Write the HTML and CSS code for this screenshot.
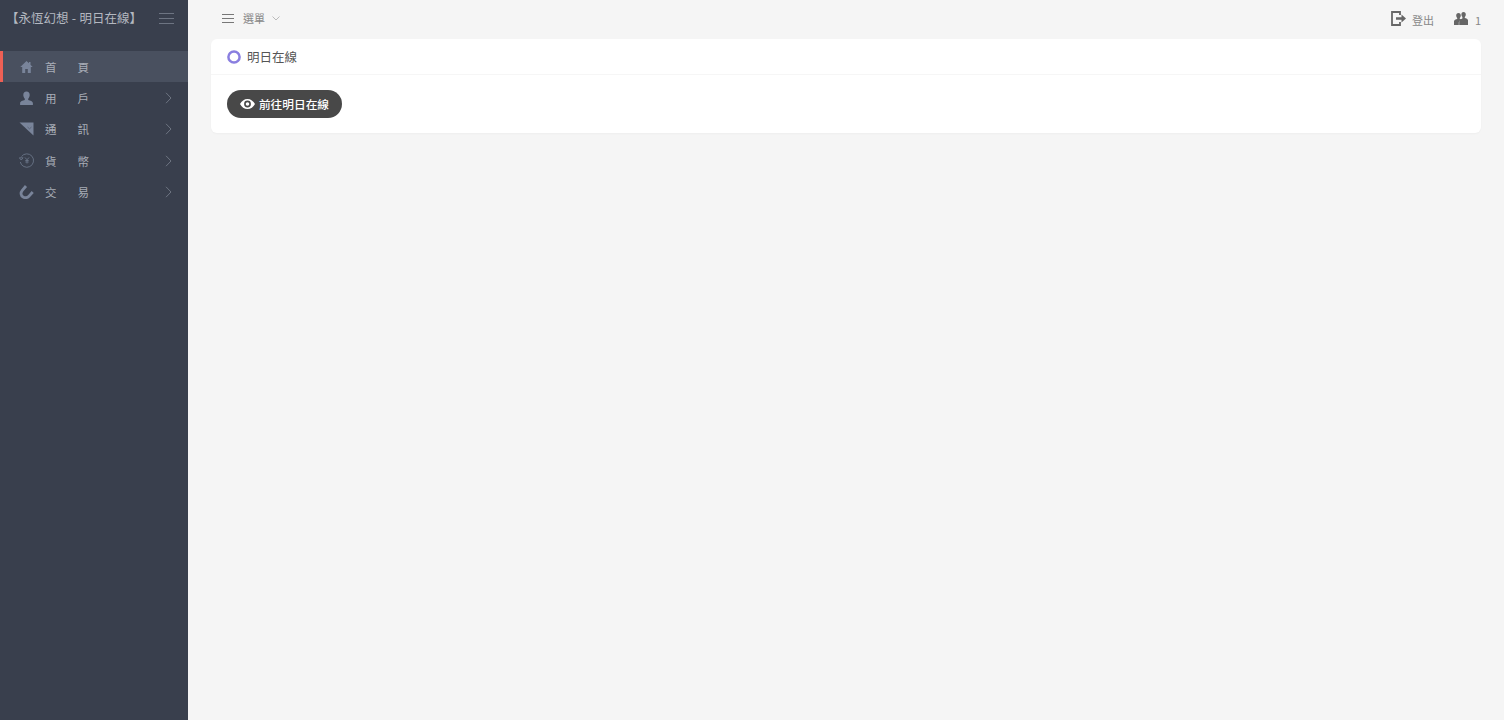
FILE: index.html
```html
<!DOCTYPE html>
<html lang="zh-Hant">
<head>
<meta charset="utf-8">
<title>永恆幻想</title>
<link rel="stylesheet" href="styles.css">
</head>
<body>
<div class="side">
  <div class="logo">
    <span class="logo-text">【永恆幻想 - 明日在線】</span>
    <svg class="logo-bars" width="15" height="11" viewBox="0 0 15 11"><path d="M0 .5h15M0 5.500h15M0 10.500h15" stroke="#6d7482" fill="none"/></svg>
  </div>
  <ul class="menu">
    <li class="on">
      <svg class="ico" width="14" height="14" viewBox="0 0 14 14"><path d="M7 1 .8 7h1.900v6h3V9h2.600v4h3V7h1.900L11 4.700V2H9.500v1.300z" fill="#79849a"/></svg>
      <span class="txt">首　頁</span>
    </li>
    <li>
      <svg class="ico" width="14" height="15" viewBox="0 0 14 15"><path d="M7 .5c2.100 0 3.200 1.500 3.200 3.500 0 1.500-.7 2.900-1.500 3.700v1.200c2 .5 4.700 1.100 4.700 3.300v1.800H.6v-1.800c0-2.200 2.700-2.800 4.700-3.300V7.700C4.500 6.900 3.800 5.500 3.800 4 3.800 2 4.900.5 7 .5z" fill="#79849a"/></svg>
      <span class="txt">用　戶</span>
      <svg class="arr" width="7" height="12" viewBox="0 0 7 12"><path d="m1 .8 5 5.200-5 5.200" stroke="#6d7482" fill="none"/></svg>
    </li>
    <li>
      <svg class="ico" width="14" height="14" viewBox="0 0 14 14"><path d="M0 .5h14v13z" fill="#79849a"/><path d="m8 5 2 1.800L12 5" stroke="#4d586b" fill="none" stroke-width=".7"/></svg>
      <span class="txt">通　訊</span>
      <svg class="arr" width="7" height="12" viewBox="0 0 7 12"><path d="m1 .8 5 5.200-5 5.200" stroke="#6d7482" fill="none"/></svg>
    </li>
    <li>
      <svg class="ico" width="15" height="15" viewBox="0 0 15 15"><path d="M2.500 3.500A6.700 6.700 0 1 1 1.300 9" stroke="#6a7588" fill="none" stroke-width=".9"/><path d="M.3 4.800h3.800L2.200 7zM6 4.500l2 2.300 2-2.300M8 6.800v3.700M6.300 7.500h3.400M6.300 9h3.400" stroke="#6a7588" fill="none" stroke-width=".9"/></svg>
      <span class="txt">貨　幣</span>
      <svg class="arr" width="7" height="12" viewBox="0 0 7 12"><path d="m1 .8 5 5.200-5 5.200" stroke="#6d7482" fill="none"/></svg>
    </li>
    <li>
      <svg class="ico" width="14" height="14" viewBox="0 0 14 14"><path d="M6.500 1 2.800 5.300C.8 7.800 1.300 10.800 3.600 12c2.400 1.300 4.800.5 6.400-1.400l3.200-3.600" stroke="#79849a" fill="none" stroke-width="2.800"/></svg>
      <span class="txt">交　易</span>
      <svg class="arr" width="7" height="12" viewBox="0 0 7 12"><path d="m1 .8 5 5.200-5 5.200" stroke="#6d7482" fill="none"/></svg>
    </li>
  </ul>
</div>
<div class="main">
  <div class="top">
    <div class="top-l">
      <svg width="12" height="9" viewBox="0 0 12 9"><path d="M0 .5h12M0 4.500h12M0 8.500h12" stroke="#777" fill="none"/></svg>
      <span class="top-menu">選單</span>
      <svg width="8" height="5" viewBox="0 0 8 5"><path d="m.5.500 3.500 3.500L7.500.500" stroke="#bbb" fill="none"/></svg>
    </div>
    <div class="top-r">
      <a class="top-link">
        <svg width="15" height="15" viewBox="0 0 15 15"><path d="M9 4V1H1v13h8v-3" stroke="#666" stroke-width="1.800" fill="none"/><path d="M5 6.300h5.500V3.600L15 7.500l-4.500 3.900V8.700H5z" fill="#666"/></svg>
        <span>登出</span>
      </a>
      <a class="top-link">
        <svg width="14" height="14" viewBox="0 0 14 14"><path d="M4.500 1C6 1 6.800 2.100 6.800 3.500c0 1.100-.5 2-1 2.600v.8c.7.200 1.400.4 2 .8-1.500.5-3 1.200-3 2.800V13H0V9.300c0-1.600 1.800-2 3.200-2.400v-.8c-.5-.6-1-1.500-1-2.600C2.200 2.100 3 1 4.500 1z" fill="#666"/><path d="M9.500 0C11 0 11.800 1.100 11.800 2.500c0 1.100-.5 2-1 2.600v.8c1.400.4 3.200.8 3.200 2.400V13H5.200V9.500c0-1.600 1.800-2.600 3.200-3V5.100c-.5-.6-1-1.500-1-2.600C7.400 1.100 8 0 9.500 0z" fill="#666"/></svg>
        <span class="num">1</span>
      </a>
    </div>
  </div>
  <div class="card">
    <div class="card-head">
      <svg class="ring" width="14" height="14" viewBox="0 0 14 14"><circle cx="7" cy="7" r="5.600" stroke="#8a7fe0" stroke-width="2.500" fill="none"/></svg>
      <span>明日在線</span>
    </div>
    <div class="card-body">
      <a class="btn">
        <svg width="15" height="10" viewBox="0 0 15 10"><path fill-rule="evenodd" d="M7.500 0C4.300 0 1.600 2 0 5c1.600 3 4.300 5 7.500 5S13.400 8 15 5c-1.600-3-4.300-5-7.500-5zm0 1.600a3.400 3.400 0 1 1 0 6.800 3.400 3.400 0 0 1 0-6.800zm0 1.600a1.800 1.800 0 1 0 0 3.600 1.800 1.800 0 0 0 0-3.600z" fill="#fff"/></svg>
        <span class="btn-txt">前往明日在線</span>
      </a>
    </div>
  </div>
</div>
</body>
</html>
```

FILE: styles.css
```css
*{
margin: 0;
padding: 0;
box-sizing: border-box;
}
html,body{
height: 100%;
}
body{
display: flex;
background: #f5f5f5;
font-family: "Noto Sans CJK TC","Noto Sans",sans-serif;
font-size: 12px;
color: #666;
overflow: hidden;
}
.side{
width: 188px;
height: 720px;
background: #393f4d;
flex: none;
}
.logo{
height: 51px;
padding: 9px 14px 0 6px;
display: flex;
justify-content: space-between;
align-items: flex-start;
}
.logo-text{
font-size: 12.500px;
word-spacing: .5px;
line-height: 17px;
color: #b4b8c0;
white-space: nowrap;
}
.logo-bars{
margin-top: 4px;
}
.menu{
list-style: none;
}
.menu li{
height: 31.4px;
display: flex;
align-items: center;
padding-left: 19px;
padding-right: 16px;
color: #a8adb7;
}
.menu li.on{
background: #49505f;
border-left: 3px solid #ee6055;
padding-left: 16px;
}
.ico{
width: 15px;
flex: none;
}
.txt{
margin-left: 11px;
font-size: 11.500px;
letter-spacing: 4.700px;
flex: 1;
white-space: nowrap;
}
.arr{
flex: none;
}
.main{
flex: 1;
padding: 0 23px;
min-width: 0;
}
.top{
height: 39px;
display: flex;
justify-content: space-between;
}
.top-l{
display: flex;
align-items: center;
height: 36px;
padding-left: 11px;
}
.top-menu{
margin: 0 7px 0 9px;
color: #888;
font-size: 11px;
}
.top-r{
display: flex;
align-items: center;
gap: 20px;
}
.top-link{
display: flex;
align-items: center;
gap: 6px;
color: #888;
font-size: 11px;
}
.top-link svg{
margin-top: -2px;
}
.num{
font-size: 11px;
margin-left: 1px;
}
.card{
background: #fff;
border-radius: 6px;
box-shadow: 0 1px 2px rgba(0,0,0,.03);
}
.card-head{
height: 36px;
border-bottom: 1px solid #f6f6f6;
padding-left: 16px;
display: flex;
align-items: center;
gap: 6px;
font-size: 12.500px;
color: #555;
}
.ring{
flex: none;
}
.card-body{
padding: 15px 16px;
}
.btn{
width: 115px;
height: 28px;
border-radius: 14px;
background: #484848;
color: #fff;
font-size: 11.700px;
font-weight: 500;
display: flex;
align-items: center;
justify-content: center;
gap: 4px;
}
.btn-txt{
margin-top: -2px;
}
```
